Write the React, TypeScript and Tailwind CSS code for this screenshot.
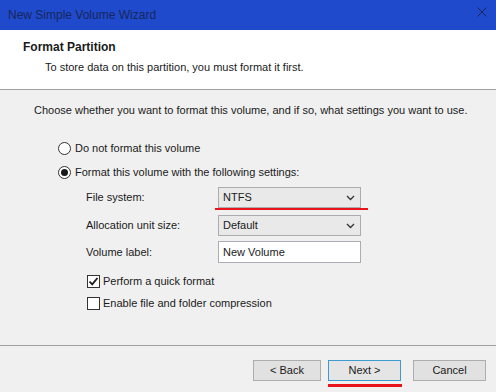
import React from 'react'

const font = "font-['Liberation_Sans',Arial,sans-serif]"

function Radio({ checked, label }: { checked?: boolean; label: string }) {
  return (
    <div className="flex h-4 items-center">
      <span className="flex h-[13px] w-[13px] items-center justify-center rounded-full border border-[#333] bg-white">
        {checked && <span className="h-[7px] w-[7px] rounded-full bg-[#1a1a1a]" />}
      </span>
      <span className="ml-[4px]">{label}</span>
    </div>
  )
}

function Checkbox({ checked, label }: { checked?: boolean; label: string }) {
  return (
    <div className="flex h-4 items-center">
      <span className="flex h-[13px] w-[13px] items-center justify-center border border-[#333] bg-white">
        {checked && (
          <svg width="11" height="11" viewBox="0 0 11 11">
            <path d="M1.5 5.5 L4.2 8.3 L9.5 2" fill="none" stroke="#1a1a1a" strokeWidth="1.8" />
          </svg>
        )}
      </span>
      <span className="ml-[3px]">{label}</span>
    </div>
  )
}

function Select({ value, marked }: { value: string; marked?: boolean }) {
  return (
    <div className="relative flex h-[21px] w-[143px] items-center justify-between border border-[#acacac] bg-[#e9e9e9] pl-[4px] pr-[5px]">
      <span>{value}</span>
      <svg width="9" height="6" viewBox="0 0 9 6">
        <path d="M1 1 L4.5 4.5 L8 1" fill="none" stroke="#333" strokeWidth="1.3" />
      </svg>
      {marked && <span className="absolute -left-[4px] -bottom-[3px] h-[2px] w-[153px] bg-[#e8141b]" />}
    </div>
  )
}

export default function App() {
  return (
    <div className={`flex h-[392px] w-[496px] flex-col bg-[#f0f0f0] text-[11px] text-[#1a1a1a] ${font}`}>
      {/* title bar */}
      <div className="flex h-[30px] items-center justify-between bg-[#1f4acb] pl-[8px] pr-[9px]">
        <span className="text-[12px] text-[#17275e]">New Simple Volume Wizard</span>
        <svg width="10" height="10" viewBox="0 0 10 10" className="-mt-[6px]">
          <path d="M0.5 0.5 L9.5 9.5 M9.5 0.5 L0.5 9.5" stroke="#17275e" strokeWidth="1" />
        </svg>
      </div>

      {/* header */}
      <div className="h-[60px] border-b border-[#a0a0a0] bg-white pl-[23px] pt-[9px]">
        <div className="h-[16px] text-[12px] font-bold leading-[16px]">Format Partition</div>
        <div className="ml-[22px] mt-[4px] leading-[16px]">To store data on this partition, you must format it first.</div>
      </div>

      {/* body */}
      <div className="flex-1 pl-[34px] pt-[12px]">
        <div className="whitespace-nowrap leading-4">Choose whether you want to format this volume, and if so, what settings you want to use.</div>
        <div className="ml-[24px] mt-[22px] flex flex-col gap-[8px]">
          <Radio label="Do not format this volume" />
          <Radio checked label="Format this volume with the following settings:" />
        </div>
        <div className="ml-[52px] mt-[7px] grid grid-cols-[132px_143px] items-center">
          <span>File system:</span>
          <Select value="NTFS" marked />
          <span className="mt-[7px]">Allocation unit size:</span>
          <div className="mt-[7px]">
            <Select value="Default" />
          </div>
          <span className="mt-[5px]">Volume label:</span>
          <div className="mt-[5px] flex h-[22px] w-[143px] items-start border border-[#abadb3] bg-white pl-[4px] pt-[2px]">
            New Volume
          </div>
        </div>
        <div className="ml-[53px] mt-[10px] flex flex-col gap-[6px]">
          <Checkbox checked label="Perform a quick format" />
          <Checkbox label="Enable file and folder compression" />
        </div>
      </div>

      {/* footer */}
      <div className="flex h-[47px] items-start justify-end border-t border-[#a0a0a0] pr-[10px] pt-[14px]">
        <button className="h-[21px] w-[68px] border border-[#adadad] bg-[#e1e1e1]">&lt; Back</button>
        <button className="relative ml-[7px] h-[21px] w-[73px] border border-[#3d9bd3] bg-[#e5e5e5]">
          Next &gt;
          <span className="absolute -bottom-[7px] -left-[1px] h-[3px] w-[74px] bg-[#e8141b]" />
        </button>
        <button className="ml-[12px] h-[21px] w-[73px] border border-[#adadad] bg-[#e1e1e1]">Cancel</button>
      </div>
    </div>
  )
}
